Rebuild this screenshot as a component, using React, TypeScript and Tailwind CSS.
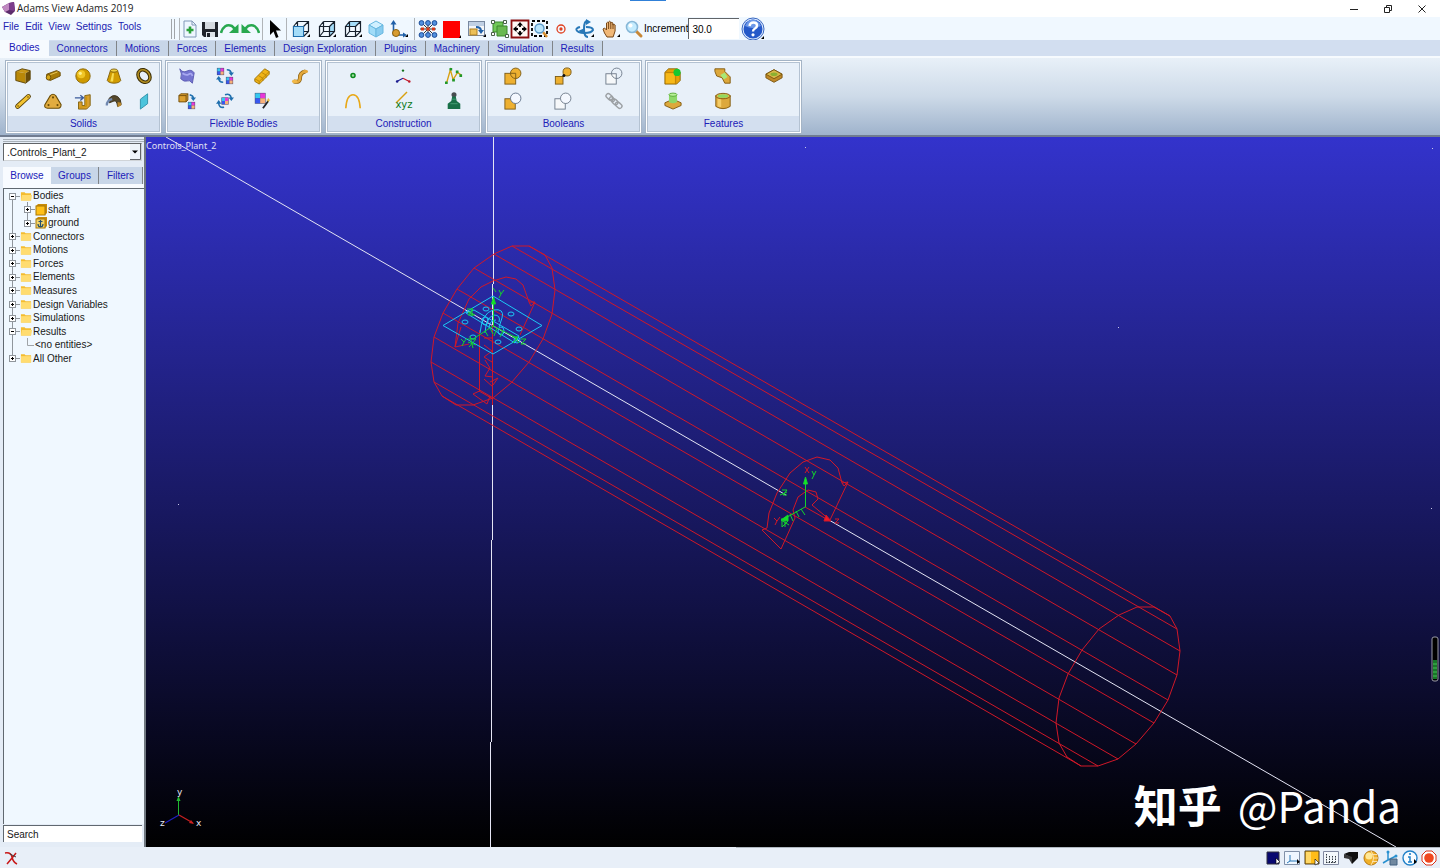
import { useState, type ReactNode } from 'react';

const gold = '#c99400';
const goldDark = '#6b4e08';
const blue = '#1f6fae';

const pixelGrid = (x: number, y: number, s: number) => (
  <g key={`${x}-${y}`}>
    <rect x={x} y={y} width={s} height={s} fill="#4a4a70" />
    <rect x={x + 0.5} y={y + 0.5} width={s / 2 - 0.5} height={s / 2 - 0.5} fill="#35c8f0" />
    <rect x={x + s / 2} y={y + 0.5} width={s / 2 - 0.5} height={s / 2 - 0.5} fill="#e838d8" />
    <rect x={x + 0.5} y={y + s / 2} width={s / 2 - 0.5} height={s / 2 - 0.5} fill="#3858f0" />
    <rect x={x + s / 2} y={y + s / 2} width={s / 2 - 0.5} height={s / 2 - 0.5} fill="#f8b078" />
  </g>
);

const cubeFrame = (
  <g fill="none" stroke="#16202c" strokeWidth="1.2">
    <path d="M2.5 7.5h10v10h-10zM6.5 2.5h11v10l-5 5M2.5 7.5l4-5M12.5 7.5l5-5M6.5 2.5v10h11M2.5 17.5l4-5" />
  </g>
);
const corner = <path d="M16 18h3v-3z" fill="#000" />;

const icons: Record<string, ReactNode> = {
  box: (
    <>
      <path d="M2 5l7-3 9 2-5 3z" fill="#c89818" />
      <path d="M2 5l11 2v11L2 15z" fill="#b88808" />
      <path d="M13 7l5-3v10l-5 4z" fill={goldDark} />
      <path d="M2 5l7-3 9 2v10l-5 4-11-3z" fill="none" stroke="#5c4408" />
    </>
  ),
  link: (
    <>
      <path d="M3 8l11-4 4 2v4L7 15l-4-2z" fill="#a87c08" stroke="#6b4e08" />
      <ellipse cx="5" cy="11.500" rx="2.500" ry="3" fill="#d8a818" stroke={goldDark} />
      <path d="M7 8.500l8-3" stroke="#f0d060" />
    </>
  ),
  sphere: (
    <>
      <circle cx="10" cy="10" r="8" fill="#cf9a00" stroke="#8a6808" />
      <circle cx="8" cy="8" r="4.500" fill="#f7d030" opacity=".8" />
      <circle cx="7" cy="7" r="1.800" fill="#fff08c" />
    </>
  ),
  frustum: (
    <>
      <path d="M6 4L2.500 15c2 4 13 4 15 0L14 4z" fill="#d29c00" stroke="#80600a" />
      <ellipse cx="10" cy="4" rx="4" ry="1.800" fill="#f0d040" stroke="#80600a" />
      <path d="M8 7l-2 9h3l1-9z" fill="#f8dc50" />
    </>
  ),
  torus: (
    <g transform="rotate(50 10 10)" fill="none">
      <ellipse cx="10" cy="10" rx="7.500" ry="6" stroke="#3c2e06" strokeWidth="4" />
      <ellipse cx="10" cy="10" rx="7.500" ry="6" stroke="#b08c20" strokeWidth="1.800" />
    </g>
  ),
  bar: (
    <>
      <path d="M4 16L16 5" stroke="#5c4408" strokeWidth="5.500" strokeLinecap="round" />
      <path d="M4 16L16 5" stroke="#f2c230" strokeWidth="3.500" strokeLinecap="round" />
      <path d="M4.500 15.500l.1-.1M15.500 5.500l.1-.1" stroke="#5c4408" strokeWidth="1.500" strokeLinecap="round" />
    </>
  ),
  plate: (
    <>
      <path d="M7 4q3-3 6 0l6 10q0 4-3 4H4q-4 0-3-4z" fill="#e2ac40" stroke="#6b4e08" strokeWidth="1.200" />
      <g fill="#6b4e08">
        <circle cx="10" cy="6" r="1.200" /><circle cx="5" cy="14.500" r="1.200" /><circle cx="15" cy="14.500" r="1.200" />
      </g>
    </>
  ),
  extrude: (
    <>
      <path d="M5 11h4v4h3V4l6-1v12l-4 4H5z" fill="#d8a030" stroke="#80600a" />
      <path d="M14 5v11l-8 1" fill="none" stroke={gold} />
      <path d="M1 6.500h9M7 3.500l3.500 3L7 9.500" fill="none" stroke="#3a5a9a" strokeWidth="1.500" />
    </>
  ),
  revolve: (
    <>
      <path d="M4 8Q8 2 14 5q4 3 4 9l-4 2q-1-7-4-6l-5 2z" fill="#55482c" stroke="#39301c" />
      <path d="M2 15q0-6 6-7" fill="none" stroke="#7088b0" strokeWidth="2.500" />
      <path d="M14 11l4 1v3l-4 2z" fill="#b8862c" />
    </>
  ),
  plane: <path d="M6 8l8-6v11l-8 6z" fill="#4cc4dc" stroke="#2c90a8" />,
  wave: (
    <>
      <path d="M2 2q3 5 8 2.500t8 2L16 18q-3-4-6-2.500T3 13q2-5-1-11z" fill="#7474d0" stroke="#5858b0" />
      <path d="M5 7q4 3 7 1t4 2" fill="none" stroke="#a8a8f0" strokeWidth="2" />
    </>
  ),
  swap: (
    <>
      {pixelGrid(1, 1, 8)}
      {pixelGrid(11, 11, 8)}
      <path d="M12 3q5 0 5 5M8 17q-5 0-5-5" fill="none" stroke={blue} strokeWidth="1.800" />
      <path d="M14 6h6l-3 4zM0 14h6l-3-4z" fill={blue} />
    </>
  ),
  brick: (
    <>
      <path d="M2 13L13 2l5 3v3L7 19l-5-3z" fill="#f0b418" stroke="#9a7008" />
      <path d="M2 13l5 3L18 5M7 16v3M6 9.500l5 3v3M9.500 6l5 3v3" fill="none" stroke="#b88408" />
    </>
  ),
  beam: (
    <>
      <path d="M3 16q7 2 7-4t6-7" fill="none" stroke="#8a6010" strokeWidth="4.500" />
      <path d="M3 16q7 2 7-4t6-7" fill="none" stroke="#e4a83c" strokeWidth="3" />
      <ellipse cx="4" cy="16" rx="3" ry="2" fill="#f0b848" /><ellipse cx="16" cy="5" rx="3" ry="2" fill="#e4a83c" />
    </>
  ),
  boxSwap: (
    <>
      <path d="M1 4l2-2h8v7l-2 2H1z" fill="#dca030" stroke="#704c08" /><path d="M1 4h8v7M9 4l2-2" fill="none" stroke="#704c08" />
      {pixelGrid(11, 11, 8)}
      <path d="M13 3q4 1 4 4" fill="none" stroke={blue} strokeWidth="1.800" /><path d="M14 6h6l-3 4z" fill={blue} />
    </>
  ),
  rotateGrid: (
    <>
      {pixelGrid(6, 6, 8)}
      <path d="M10 3q6-2 7 4M9 17q-6 1-6-5" fill="none" stroke={blue} strokeWidth="1.800" />
      <path d="M14 6h6l-3 4zM0 13l3-4 3 4z" fill={blue} />
    </>
  ),
  wand: (
    <>
      {pixelGrid(2, 1, 12)}
      <path d="M11 18l6-8" stroke="#222" strokeWidth="2" /><path d="M17 7v4M15 9h4" stroke="#e8b020" />
    </>
  ),
  point: <circle cx="10" cy="9.500" r="2" fill="#9fdc9f" stroke="#0a8a1c" strokeWidth="1.500" />,
  marker: (
    <>
      <path d="M10 12.500L3 16" stroke="#1c1c90" strokeWidth="1.200" /><path d="M10 12.500l7 3.500" stroke="#c01828" strokeWidth="1.200" />
      <circle cx="10" cy="4" r="1.300" fill="#107018" />
      <circle cx="3.500" cy="16" r="1.400" fill="#1c1c90" /><circle cx="17" cy="16" r="1.400" fill="#c01828" />
    </>
  ),
  polyline: (
    <>
      <path d="M2 17L6 3l3 11 5-8 4 3" fill="none" stroke="#d8a010" strokeWidth="1.500" />
      <g fill="#209828"><path d="M0 16h3v3H0zM5 1h3v3H5zM8 13h3v3H8zM12 4h3v3h-3zM16 8h3v3h-3z" /></g>
    </>
  ),
  arc: <path d="M2 18Q3 3 10 3t8 15" fill="none" stroke="#e8a818" strokeWidth="1.800" />,
  mass: (
    <>
      <circle cx="10" cy="3" r="2.800" fill="#484c50" /><path d="M8 5h4l1 5 4 3v6H3v-6l4-3z" fill="#187048" />
      <path d="M8 8h4M6 13h8" stroke="#48a078" />
    </>
  ),
  unite: (
    <><rect x="1" y="7" width="12" height="12" fill="#eeb030" stroke="#7a5a14" /><circle cx="13" cy="7" r="5.800" fill="#eeb030" stroke="#7a5a14" /><path d="M7 7h6v6" fill="none" stroke="#7a5a14" /></>
  ),
  merge: (
    <><rect x="1.500" y="10.500" width="8.500" height="8.500" fill="#eeb030" stroke="#7a5a14" /><circle cx="14.500" cy="5.500" r="4.500" fill="#eeb030" stroke="#7a5a14" /><circle cx="11" cy="9.500" r="1.700" fill="#111" /></>
  ),
  intersect: (
    <g fill="none" stroke="#6c7888"><rect x="1" y="7.500" width="11.500" height="11.500" fill="#f6f8fa" /><circle cx="13" cy="7" r="5.800" /></g>
  ),
  subtract: (
    <><rect x="1" y="7.500" width="11.500" height="11.500" fill="#eeb030" stroke="#7a5a14" /><circle cx="13" cy="7" r="5.800" fill="#f4f8ff" stroke="#607088" /></>
  ),
  split: (
    <g stroke="#6c7888"><rect x="1" y="7.500" width="11.500" height="11.500" fill="#f6f8fa" /><circle cx="13" cy="7" r="5.800" fill="#f4f8ff" /></g>
  ),
  chain: (
    <g fill="none" stroke="#9ca0a4" strokeWidth="1.600"><g transform="rotate(42 10 10)"><rect x="-1" y="7.500" width="8" height="5" rx="2.500" /><rect x="4" y="8" width="6" height="4" rx="2" /><rect x="8" y="7.500" width="7" height="5" rx="2.500" /><rect x="13" y="7.500" width="8" height="5" rx="2.500" /></g></g>
  ),
  fillet: (
    <>
      <path d="M1 6l4-4h10l3 4v9l-4 4H1z" fill="#e8a008" stroke="#8a6808" /><path d="M1 6h12v13" fill="none" stroke="#b88008" />
      <path d="M2 7h10v11H2z" fill="#f6b818" />
      <circle cx="14.500" cy="6" r="4" fill="#18c830" />
    </>
  ),
  chamfer: (
    <><path d="M1 2h11v3l6 6v7h-6l-3-6-6-2-2-5z" fill="#dda83c" stroke="#80580c" /><path d="M7 9l5-3 3 5-4 3z" fill="#a8e878" /></>
  ),
  hole: (
    <><path d="M1 8l9-5 9 5v4l-9 5-9-5z" fill="#c08828" stroke="#78540c" /><path d="M1 8l9-5 9 5-9 5z" fill="#d8b848" stroke="#78540c" /><ellipse cx="10" cy="8" rx="4" ry="2" fill="#8cb030" /></>
  ),
  boss: (
    <><path d="M1 12l9-4 9 4v3l-9 4-9-4z" fill="#dda83c" stroke="#80580c" /><path d="M5.500 3v8q4.500 3 9 0V3z" fill="#8cd868" /><ellipse cx="10" cy="3" rx="4.500" ry="1.800" fill="#b8f098" stroke="#58a838" /></>
  ),
  hollow: (
    <><path d="M2 4v12q8 5 16 0V4z" fill="#dda83c" stroke="#80580c" /><path d="M4 7v9l4 1V8z" fill="#f4cc68" /><ellipse cx="10" cy="4.500" rx="8" ry="3" fill="#e8b848" stroke="#80580c" /><ellipse cx="10" cy="4.500" rx="6" ry="2" fill="#90d860" /></>
  ),
  newDoc: (
    <>
      <path d="M4 2h8l4 4v12H4z" fill="#eef6ff" stroke="#8098b8" /><path d="M12 2v4h4" fill="none" stroke="#8098b8" />
      <path d="M10 7.500v7M6.500 11h7" stroke="#28a038" strokeWidth="2.600" />
    </>
  ),
  save: (
    <>
      <path d="M2 3h16v15H4l-2-2z" fill="#20242c" /><path d="M5 3h10v7H5z" fill="#d4dae0" /><path d="M6 13h9v5H6z" fill="#dfe4ea" /><path d="M7 14h3v4H7z" fill="#20242c" />
    </>
  ),
  redo: (
    <><path d="M1 14q3-10 11-7l4 4" fill="none" stroke="#28a850" strokeWidth="2.600" /><path d="M18.500 5v9H9z" fill="#28a850" /></>
  ),
  undo: (
    <><path d="M19 14Q16 4 8 7l-4 4" fill="none" stroke="#28a850" strokeWidth="2.600" /><path d="M1.500 5v9H11z" fill="#28a850" /></>
  ),
  cursor: <path d="M6 1v15l3.500-3.500L12 19l2.500-1L12 11.500h5z" fill="#000" />,
  cubeFront: <>{cubeFrame}<path d="M2.500 7.500h10v10h-10z" fill="#a4dcf8" stroke="#1f6fae" />{corner}</>,
  cubeSide: <><path d="M12.500 7.500l5-5v10l-5 5z" fill="#a4dcf8" />{cubeFrame}{corner}</>,
  cubeTop: <><path d="M2.500 7.500l4-5h11l-5 5z" fill="#a4dcf8" />{cubeFrame}{corner}</>,
  cubeIso: (
    <g stroke="#68b8e0"><path d="M3 6l7-4 7 4-7 4z" fill="#d0f0ff" /><path d="M3 6l7 4v8l-7-4z" fill="#a0dcf8" /><path d="M17 6l-7 4v8l7-4z" fill="#88ccf0" /></g>
  ),
  axes: (
    <><path d="M4.500 3v13H16" fill="none" stroke="#2060a8" strokeWidth="1.600" /><path d="M1.500 5.500l3-4.500 3 4.500zM14 13.500l4 2.500-4 2.500z" fill="#2060a8" /><circle cx="7" cy="14" r="3.500" fill="#d89c30" stroke="#8a6010" />{corner}</>
  ),
  nodes: (
    <>
      <path d="M4 4l12 12M16 4L4 16M10 3v14M2 10h16" stroke="#333" />
      {[3.5, 10, 16.5].map((x) => <g key={x} fill="#5090e0" stroke="#1c4c98"><circle cx={x} cy="4" r="2.400" /><circle cx={x} cy="16" r="2.400" /></g>)}
      <path d="M3 10h3M8.500 10h3M14 10h3" stroke="#d83818" strokeWidth="3" />
    </>
  ),
  red: <><path d="M1 2h17v17H1z" fill="#ff0000" /><path d="M17 19h2v-3z" fill="#000" /></>,
  windows: (
    <><rect x="1.500" y="2.500" width="16" height="14" fill="#f4f6f8" stroke="#7888a0" /><path d="M2 3h15v4H2z" fill="#c0d0e4" /><rect x="3" y="10" width="7" height="6" fill="#ecc058" stroke="#b08020" /><path d="M9 8q5 0 5 4" fill="none" stroke="#2060a8" strokeWidth="2" /><path d="M11 11h6l-3 4z" fill="#2060a8" />{corner}</>
  ),
  group: (
    <><path d="M3 3h10v10H3z" fill="#70c858" stroke="#388828" /><path d="M7 7h10v10H7z" fill="#68b850" stroke="#388828" /><g fill="#fff" stroke="#486048"><path d="M1.500 1.500h3v3h-3zM13.500 1.500h3v3h-3zM1.500 13.500h3v3h-3zM15.500 15.500h3v3h-3z" /></g></>
  ),
  pan: (
    <><path d="M1.500 1.500h17v17h-17z" fill="#fff8f4" stroke="#8c1010" strokeWidth="1.800" /><path d="M10 3l3 3.500H7zM10 17l3-3.500H7zM3 10l3.500-3v6zM17 10l-3.500-3v6z" fill="#000" /><path d="M10 6v2M10 12v2M6 10h2M12 10h2" stroke="#000" strokeWidth="1.800" /></>
  ),
  zoomBox: (
    <><path d="M2 2h15v15H2z" fill="none" stroke="#000" strokeWidth="1.800" strokeDasharray="3 2" /><path d="M13 13l4 5" stroke="#d89030" strokeWidth="2.500" /><circle cx="9.500" cy="9.500" r="4.500" fill="#b8e4fc" stroke="#5898c8" strokeWidth="1.400" /></>
  ),
  target: <g fill="none" stroke="#e04020" strokeWidth="1.300"><circle cx="10" cy="10" r="4" /><circle cx="10" cy="10" r="1" fill="#e04020" /></g>,
  rotate: (
    <><g fill="none" stroke="#2878b8" strokeWidth="2"><path d="M5 8q-4 1-3.500 3 1 3 8 3t8.500-3q0-3-7-3" /><path d="M13 2Q9 1 9 10q0 8 4 8" /></g><path d="M11 0l5 3-5 3zM3 12l7-3v6z" fill="#2878b8" />{corner}</>
  ),
  hand: (
    <><path d="M6 18q-3-4-4-8l1.500-1L5.500 11V4q1-1.500 2 0V3q1-1.500 2.200 0v1q1-1.300 2.200 0v2q1.500-1.200 2.200 0v6l-2 6z" fill="#f0b878" stroke="#784818" /><path d="M7.600 4v6M9.800 4v6M12 5v5" stroke="#784818" />{corner}</>
  ),
  zoom: (
    <><path d="M12 12l5 5" stroke="#c88838" strokeWidth="3" strokeLinecap="round" /><circle cx="8" cy="8" r="5.500" fill="#c4ecff" stroke="#88b8d8" strokeWidth="1.600" /><circle cx="6.500" cy="6.500" r="2" fill="#fff" /></>
  ),
};

function Icon({ name, className = 'size-5' }: { name: string; className?: string }) {
  return (
    <svg viewBox="0 0 20 20" className={`${className} shrink-0`} aria-hidden="true">
      {icons[name]}
    </svg>
  );
}

function XyzIcon() {
  return (
    <svg viewBox="0 0 20 20" className="size-5 shrink-0 overflow-visible" aria-hidden="true">
      <path d="M3 12L14 1" stroke="#d8a010" strokeWidth="1.500" />
      <text x="11" y="17" textAnchor="middle" className="font-['DejaVu_Sans'] text-[10px]" fill="#0e7a20">xyz</text>
    </svg>
  );
}

type Tool = { name: string; label: string; width: string; divider?: boolean };
const tools: Tool[] = [
  { name: 'newDoc', label: 'New', width: 'w-5' },
  { name: 'save', label: 'Save', width: 'w-5' },
  { name: 'redo', label: 'Redo', width: 'w-5' },
  { name: 'undo', label: 'Undo', width: 'w-5', divider: true },
  { name: 'cursor', label: 'Select', width: 'w-5', divider: true },
  { name: 'cubeFront', label: 'Front view', width: 'w-[26px]' },
  { name: 'cubeSide', label: 'Right view', width: 'w-[26px]' },
  { name: 'cubeTop', label: 'Top view', width: 'w-[26px]' },
  { name: 'cubeIso', label: 'Isometric view', width: 'w-5' },
  { name: 'axes', label: 'Orient', width: 'w-[26px]', divider: true },
  { name: 'nodes', label: 'Modeling', width: 'w-6' },
  { name: 'red', label: 'Color', width: 'w-6' },
  { name: 'windows', label: 'Window layout', width: 'w-[26px]' },
  { name: 'group', label: 'Grid', width: 'w-5' },
  { name: 'pan', label: 'Fit', width: 'w-5' },
  { name: 'zoomBox', label: 'Zoom box', width: 'w-5' },
  { name: 'target', label: 'Center', width: 'w-[22px]' },
  { name: 'rotate', label: 'Rotate', width: 'w-[26px]' },
  { name: 'hand', label: 'Translate', width: 'w-[26px]' },
  { name: 'zoom', label: 'Zoom', width: 'w-5' },
];

const ribbonTabs = ['Bodies', 'Connectors', 'Motions', 'Forces', 'Elements', 'Design Exploration', 'Plugins', 'Machinery', 'Simulation', 'Results'];

const ribbonGroups = [
  { title: 'Solids', cols: 'grid-cols-5', items: ['box', 'link', 'sphere', 'frustum', 'torus', 'bar', 'plate', 'extrude', 'revolve', 'plane'] },
  { title: 'Flexible Bodies', cols: 'grid-cols-4', items: ['wave', 'swap', 'brick', 'beam', 'boxSwap', 'rotateGrid', 'wand'] },
  { title: 'Construction', cols: 'grid-cols-3', items: ['point', 'marker', 'polyline', 'arc', 'xyz', 'mass'] },
  { title: 'Booleans', cols: 'grid-cols-3', items: ['unite', 'merge', 'intersect', 'subtract', 'split', 'chain'] },
  { title: 'Features', cols: 'grid-cols-3', items: ['fillet', 'chamfer', 'hole', 'boss', 'hollow'] },
];

type Node = { label: string; kind: 'folder' | 'part' | 'ground' | 'none'; open?: boolean };
const tree: Node[] = [
  { label: 'Bodies', kind: 'folder', open: true },
  { label: 'shaft', kind: 'part' },
  { label: 'ground', kind: 'ground' },
  { label: 'Connectors', kind: 'folder' },
  { label: 'Motions', kind: 'folder' },
  { label: 'Forces', kind: 'folder' },
  { label: 'Elements', kind: 'folder' },
  { label: 'Measures', kind: 'folder' },
  { label: 'Design Variables', kind: 'folder' },
  { label: 'Simulations', kind: 'folder' },
  { label: 'Results', kind: 'folder', open: true },
  { label: '<no entities>', kind: 'none' },
  { label: 'All Other', kind: 'folder' },
];

function TitleBar() {
  return (
    <header className="flex h-[17px] shrink-0 items-center bg-white pl-0.5 font-['Open_Sans',sans-serif] text-[10px] text-[#222]">
      <svg viewBox="0 0 13 13" className="size-[13px]" aria-hidden="true">
        <path d="M0 5l7-4 5-1 1 9-4 4-6-3z" fill="#5c2c6c" />
        <path d="M0 5l7-4v7l-4 2z" fill="#c088c0" />
        <path d="M7 1l5-1 1 9-6-1z" fill="#7c3c8c" />
      </svg>
      <h1 className="ml-0.5 grow">Adams View Adams 2019</h1>
      <div className="flex items-center gap-[22px] pr-3">
        <button aria-label="Minimize"><svg viewBox="0 0 12 12" className="size-3"><path d="M2 6.500h8" stroke="#222" /></svg></button>
        <button aria-label="Restore"><svg viewBox="0 0 12 12" className="size-3" fill="none" stroke="#222"><path d="M2.500 4.500h5v5h-5zM4.500 4V2.500h5v5H8" /></svg></button>
        <button aria-label="Close"><svg viewBox="0 0 12 12" className="size-3" stroke="#222"><path d="M2.500 2.500l7 7M9.500 2.500l-7 7" /></svg></button>
      </div>
      <div className="absolute top-0 left-[630px] h-px w-9 bg-[#3080d8]" />
    </header>
  );
}

function Toolbar() {
  return (
    <div className="flex h-[23px] shrink-0 items-center bg-[#f0f8ff]">
      <nav className="flex w-[171px] shrink-0 items-center gap-1.5 self-start pt-0.5 pl-[3px] leading-4 text-[#2020b0]">
        {['File', 'Edit', 'View', 'Settings', 'Tools'].map((m) => (
          <button key={m}>{m}</button>
        ))}
      </nav>
      <div className="mr-1 h-5 w-1 border-x border-[#a0a4a8]" />
      <div className="h-[22px] w-px bg-[#b0b4b8]" />
      {tools.map((t) => (
        <div key={t.name} className="flex items-center">
          <button aria-label={t.label} className={`${t.width} flex justify-center`}>
            <Icon name={t.name} />
          </button>
          {t.divider && <div className="mr-px ml-0.5 h-[22px] w-px bg-[#b0b4b8]" />}
        </div>
      ))}
      <label htmlFor="increment" className="text-black">Increment</label>
      <input id="increment" defaultValue="30.0" className="h-[21px] w-[51px] border-t border-l border-[#606468] bg-white px-[3px] text-black outline-none" />
      <button aria-label="Help" className="ml-0.5">
        <svg viewBox="0 0 24 24" className="size-6">
          <circle cx="12" cy="12" r="11" fill="#e0ecff" stroke="#3a68c0" />
          <circle cx="12" cy="12" r="9.500" fill="#2458c8" />
          <path d="M4 9q3-7 8-6.500T20 9q-8 4-16 0z" fill="#6c98e8" />
          <path d="M8.500 9q.5-3.500 4-3.500t3.500 3q0 2-2 3t-2 3" fill="none" stroke="#fff" strokeWidth="2.400" />
          <circle cx="12" cy="17.800" r="1.600" fill="#fff" /><path d="M20 22h3v-3z" fill="#000" />
        </svg>
      </button>
    </div>
  );
}

function Ribbon() {
  const [active, setActive] = useState('Bodies');
  return (
    <>
      <div role="tablist" className="flex h-4 shrink-0 bg-[#d2def0]">
        {ribbonTabs.map((t) => (
          <button
            key={t}
            role="tab"
            aria-selected={t === active}
            onClick={() => setActive(t)}
            className={`leading-4 text-[#2020b8] ${t === active ? 'bg-[#f6fafe] px-[9px]' : 'mt-px border-r border-[#808488] bg-[#c8d6e8] px-2'}`}
          >
            {t}
          </button>
        ))}
      </div>
      <div className="flex h-[81px] shrink-0 gap-[3px] border-t-2 border-b-2 border-t-[#f6fafe] border-b-[#707c90] bg-linear-to-b/srgb from-[#e8f0f8] via-[#cddae8] to-[#9fb3cc] px-[5px] pt-0.5">
        {ribbonGroups.map((g) => (
          <section key={g.title} className="flex h-[74px] w-[157px] flex-col border border-[#a4b4c6] bg-white p-px">
            <div className="flex grow flex-col border border-[#b4c2d2] bg-[#e8f0f9]">
              <div className={`grid grow content-start items-center justify-items-center ${g.cols}`}>
                {g.items.map((n) => (
                  <button key={n} aria-label={n} className="flex h-[25px] items-center">
                    {n === 'xyz' ? <XyzIcon /> : <Icon name={n} className={n === 'point' ? 'size-5' : 'size-[18px]'} />}
                  </button>
                ))}
              </div>
              <h2 className="bg-[#d3dfef] text-center leading-[15px] text-[#2020b8]">{g.title}</h2>
            </div>
          </section>
        ))}
      </div>
    </>
  );
}

function TreeRow({ node, first, last }: { node: Node; first: boolean; last: boolean }) {
  const folder = node.kind === 'folder';
  return (
    <li className="flex min-h-0 flex-1 items-center whitespace-nowrap">
      <svg viewBox="0 0 16 14" className="h-3.5 w-4 shrink-0" aria-hidden="true">
        {!last && <path d={first ? 'M8.500 6v8' : 'M8.500 0v14'} stroke="#90969c" />}
        {last && <path d="M8.500 0v7" stroke="#90969c" />}
        {folder && (
          <>
            <path d="M8 7.500h8" stroke="#90969c" />
            <rect x="5.500" y="4.500" width="6" height="6" fill="#fff" stroke="#90969c" />
            <path d={node.open ? 'M7 7.500h3' : 'M7 7.500h3M8.500 6v3'} stroke="#000" />
          </>
        )}
      </svg>
      {folder && (
        <svg viewBox="0 0 13 12" className="mr-px h-3 w-3 shrink-0" aria-hidden="true">
          <path d="M1 2h4l1 1h6v8H1z" fill="#f4bc30" />
          <path d={node.open ? 'M2 5h11l-1 6H1z' : 'M1 4h11v7H1z'} fill="#ffdc70" />
        </svg>
      )}
      {!folder && (
        <svg viewBox="0 0 15 14" className="h-3.5 w-[15px] shrink-0" aria-hidden="true">
          {node.kind === 'none' ? (
            <path d="M7.500 0v7.500H14" fill="none" stroke="#a0a4a8" />
          ) : (
            <>
              <path d={node.kind === 'part' ? 'M7.500 0v14M7 7.500h8' : 'M7.500 0v7M7 7.500h8'} fill="none" stroke="#90969c" />
              <rect x="4.500" y="4.500" width="6" height="6" fill="#fff" stroke="#90969c" />
              <path d="M6 7.500h3M7.500 6v3" stroke="#000" />
            </>
          )}
        </svg>
      )}
      {(node.kind === 'part' || node.kind === 'ground') && (
        <svg viewBox="0 0 13 13" className="size-[13px] shrink-0" aria-hidden="true">
          <path d="M1 3l2-2h9v9l-2 2H1z" fill="#c88c08" />
          <rect x="1" y="3" width="9" height="9" fill={node.kind === 'ground' ? '#f4d468' : '#ffc018'} stroke="#a87808" />
          {node.kind === 'ground' && <path d="M5.500 4v7M3.500 5.500h4M3 8q0 3 2.500 3T8 8" fill="none" stroke="#28506c" strokeWidth="1.200" />}
        </svg>
      )}
      <span>{node.label}</span>
    </li>
  );
}

function Sidebar() {
  const [tab, setTab] = useState('Browse');
  return (
    <aside className="flex w-[146px] shrink-0 flex-col border-r-2 border-[#707880] bg-[#e4ecf6] pl-[3px] text-[#181818]">
      <div className="mt-0.5 h-[3px] border-y border-[#a8b0b8]" />
      <div className="relative mt-px mr-0.5">
        <select aria-label="Model" className="h-[18px] w-full appearance-none border border-t-[#606468] border-r-[#d0d4d8] border-b-[#d0d4d8] border-l-[#606468] bg-white pl-[3px]">
          <option>.Controls_Plant_2</option>
        </select>
        <svg viewBox="0 0 11 16" className="pointer-events-none absolute top-px right-px h-4 w-[11px]" aria-hidden="true">
          <path d="M0 0h11v16H0z" fill="#eef4fa" /><path d="M0 15.500h10.500V0" fill="none" stroke="#606468" />
          <path d="M2 6.500h6L5 9.500z" fill="#000" />
        </svg>
      </div>
      <div role="tablist" className="mt-1.5 flex h-[17px]">
        {[['Browse', 'w-12'], ['Groups', 'w-12'], ['Filters', 'w-11']].map(([t, w]) => (
          <button
            key={t}
            role="tab"
            aria-selected={t === tab}
            onClick={() => setTab(t)}
            className={`${w} leading-4 text-[#2020b8] ${t === tab ? 'bg-[#f8fbff]' : 'border-r border-[#808488] bg-[#c8d6e8]'}`}
          >
            {t}
          </button>
        ))}
      </div>
      <div className="h-1 shrink-0 bg-[#f8fbff]" />
      <div className="grow border-t border-l border-[#606870] bg-[#f0f8ff]">
        <ul aria-label="Model tree" className="flex h-[176px] flex-col">
          {tree.map((n, i) => (
            <TreeRow key={n.label} node={n} first={i === 0} last={i === tree.length - 1} />
          ))}
        </ul>
      </div>
      <input aria-label="Search" defaultValue="Search" className="mt-px mr-0.5 mb-[5px] h-[17px] border-t border-l border-[#606870] bg-white px-[3px] outline-none" />
    </aside>
  );
}

const shaft = { dx: 625, dy: 361 };
const rim: [number, number][] = [
  [1137, 607], [1154, 607], [1170, 616], [1177, 629], [1180, 651], [1177, 675], [1168, 700], [1154, 723], [1136, 744], [1118, 759],
  [1098, 766], [1081, 766], [1067, 757], [1059, 743], [1056, 723], [1059, 698], [1068, 674], [1082, 650], [1099, 629], [1119, 615],
];
const rimPath = `M${rim.map((p) => p.join(' ')).join('L')}Z`;
const generators = rim.slice(2, 12).map(([x, y], i) => {
  const [nx, ny] = rim[(21 - i) % 20];
  return `M${x} ${y}L${nx - shaft.dx} ${ny - shaft.dy}`;
});

function Scene() {
  return (
    <svg viewBox="146 137 1294 710" preserveAspectRatio="xMidYMid slice" className="absolute inset-0 size-full" role="img" aria-label="Shaft model">
      <g fill="none" stroke="#e4e4f4">
        <path d="M166 137L786 495M829 520L1396 847" />
        <path d="M493.500 137L492.500 443L490.500 847" shapeRendering="crispEdges" />
      </g>
      <g fill="none" stroke="#d01828">
        <path d={rimPath} />
        <path d={rimPath} transform={`translate(${-shaft.dx} ${-shaft.dy})`} />
        {generators.map((d) => <path key={d} d={d} />)}
      </g>
      <g fill="none" stroke="#d01828">
        <path d="M762 530L767 528L769 513L777 493L790 473L803 462L817 457L830 460L838 468L842 483L848 482L830 520L812 505L818 499L816 492L808 490L798 497L793 510L795 518L781 549ZM842 483l2 3 4-4" />
        <path d="M805 507L830 521" />
        <path d="M826 515l5 6h-7z" fill="#f01828" />
        <path d="M455 347L458 323L469 299L481 287L493 281L506 277L516 279L523 285L529 302L535 302L520 335M529 302l2 4 4-4M455 347l6-20M455 347l14-3" />
        <path d="M479.500 330V391L473 394L487 404L490 396M492.500 325v80M479 391l14 8M484 338h9M484 345l8 6-8 6 8 5M485 360l5 8-5 8 8 1M484 379l9 8M490 382l8-4-5 7" />
        <path d="M805 467l4 6M809 467l-4 6M774 518l3 3 3-4M777 521l-2 4M835 519h4l-4 4h4" />
      </g>
      <g fill="none" stroke="#1cc8f4">
        <path d="M443 325.500L493 296L542 325.500L493 354Z" />
        <path d="M466 313l8-3 45 26-4 7zM480 333q2-20 13-23 12-2 9 8l-3 9M485 333q1-16 9-18 7 0 5 7M489 329q0-9 7-9" />
        <ellipse cx="486" cy="309" rx="3" ry="2" /><ellipse cx="511" cy="314" rx="3" ry="2" />
        <ellipse cx="519" cy="329" rx="3" ry="2" /><ellipse cx="498" cy="342" rx="3" ry="2" />
        <ellipse cx="465" cy="322" rx="3" ry="2" /><ellipse cx="473" cy="337" rx="3" ry="2" />
        <ellipse cx="485" cy="321" rx="3" ry="4" /><ellipse cx="501" cy="331" rx="3" ry="4" />
        <ellipse cx="517" cy="340" rx="3" ry="3" />
      </g>
      <g fill="none" stroke="#14d42c">
        <path d="M805.500 507V480M805 507l-23 13M801 509l4 6M796 511l3 6M790 514l3 7" />
        <path d="M805.500 477l2 7h-4zM781 520l7-5v6z" fill="#14e428" />
        <path d="M812 471l2 4 2-4M814 475l-2 4M782 490h5l-4 5h4M780 495l7-3M782 518v9l6-6M781 520l8 5M785 518v9" />
        <path d="M493.500 327v-25M493 326l-20 13M493 326l24 12M485 331l3 5M490 328l3 6M497 328l-3 8M503 331l-3 6" />
        <path d="M493.500 297l2 7h-4z" fill="#14e428" />
        <path d="M493 288l3 4M499 290l2 4 3-4M501 294l-2 4M467 309h6l-5 6h6M468 312l7 3M472 308v8M461 339l3 3 3-4M464 342l-2 4M468 339h8l-7 8M470 336l3 12M468 342l8 3M512 337h6l-5 6M514 336l5 7M521 339h5l-5 5h5" />
      </g>
      <g fill="none">
        <path d="M178.500 815V799" stroke="#20b830" /><path d="M178.500 796l2 5h-4z" fill="#20b830" />
        <path d="M179 815l-14 8" stroke="#2020c0" strokeWidth="1.300" /><path d="M179 815l14 8" stroke="#c82020" strokeWidth="1.300" /><path d="M194 824l-5-1 2-3z" fill="#c82020" />
      </g>
      <g fill="#e8e8f4" className="font-['DejaVu_Sans',sans-serif] text-[9px]">
        <text x="177" y="795">y</text><text x="160" y="826">z</text><text x="196" y="826">x</text>
      </g>
      <path d="M805 147.500h1M1118 327.500h1M178 504.500h1M1431 508.500h1M1432 148.500h1" stroke="#c8c8e8" />
    </svg>
  );
}

function Viewport() {
  return (
    <main className="relative min-w-0 grow overflow-hidden bg-linear-to-b/srgb from-[#3333cc] to-black">
      <Scene />
      <p className="relative pt-[3px] font-['Noto_Sans',sans-serif] text-[9px] leading-3 text-[#e0e0f4]">Controls_Plant_2</p>
      <p className="absolute right-[39px] bottom-2.5 flex items-baseline gap-4 font-['Noto_Sans_CJK_SC',sans-serif] leading-[64px] text-white">
        <span className="text-[44px] font-bold">知乎</span>
        <span className="text-[42px]">@Panda</span>
      </p>
      <svg viewBox="0 0 8 46" className="absolute right-px bottom-[165px] h-[46px] w-2" aria-hidden="true">
        <rect x="1" y="1" width="6" height="44" rx="2" fill="#000" stroke="#9a9aa8" />
        <path d="M2 24h4v19H2z" fill="#187828" /><path d="M2 28h4M2 32h4M2 36h4M2 40h4" stroke="#48c058" />
      </svg>
    </main>
  );
}

const statusIcons: [string, ReactNode][] = [
  ['Background', <><path d="M2 2h12v12H2z" fill="#080870" stroke="#303040" /><path d="M11 8v6l4-2z" fill="#fff" stroke="#000" strokeWidth=".6" /></>],
  ['Triad', <><path d="M.5 1.500h15v13H.5z" fill="#eef6ff" stroke="#8090a8" /><path d="M6 5v6l-3 2M6 11h7" fill="none" stroke="#2878b8" /><path d="M13 9v5l3-2z" fill="#000" /></>],
  ['Render', <><path d="M1 1h14v13H1z" fill="#ffbc18" stroke="#504020" /><path d="M2 2h5v11H2z" fill="#ffd868" /><path d="M11 9v6l4-2z" fill="#fff" stroke="#000" strokeWidth=".6" /></>],
  ['Working grid', <><path d="M.5 1.500h15v13H.5z" fill="#f4f8fc" stroke="#8088a0" /><path d="M3.500 4v9M6.500 6v7M9.500 6v7M12.500 6v7M3 12.500h10" stroke="#303840" strokeDasharray="1.500 1" /></>],
  ['Perspective', <><path d="M1 4l5-2h9v6l-6 6V8z" fill="#101010" /><path d="M1 4l8 3v7L6 9 1 8z" fill="#383838" /></>],
  ['Globe', <><circle cx="8" cy="8" r="7" fill="#f0b028" stroke="#b87810" /><circle cx="6" cy="6" r="3.500" fill="#ffe898" /><path d="M8 1q5 7 0 14M10 8h5M9 4.500h5M9 11.500h5" fill="none" stroke="#f8e0b0" /></>],
  ['Coordinate', <><path d="M6 2v8l-5 3M6 10l8-4" fill="none" stroke="#2890d0" strokeWidth="1.500" /><circle cx="6" cy="2" r="1.500" fill="#2890d0" /><circle cx="14" cy="6" r="1.500" fill="#2890d0" /><path d="M8 9h7v6H8z" fill="#7088a0" stroke="#406080" /></>],
  ['Information', <><circle cx="8" cy="8" r="7" fill="#f8fcff" stroke="#2080c8" strokeWidth="1.400" /><path d="M6 7h2v5M6 12h4" fill="none" stroke="#2080c8" strokeWidth="1.500" /><circle cx="8" cy="4" r="1.100" fill="#2080c8" /><path d="M12 9v5l3-2z" fill="#000" /></>],
  ['Stop', <><path d="M5 1h6l4 4v6l-4 4H5l-4-4V5z" fill="#fff" stroke="#d83018" /><circle cx="8" cy="8" r="4.800" fill="#f04820" /></>],
];

function StatusBar() {
  return (
    <footer className="flex h-[21px] shrink-0 items-center bg-[#e8eff8] pl-1">
      <svg viewBox="0 0 14 14" className="size-3.5" fill="none" stroke="#c81818" strokeWidth="1.500" aria-hidden="true">
        <path d="M1 2q6-1 7 4t5 7M12 2Q9 6 3 13" /><path d="M6 3l6 3" stroke="#404040" strokeWidth="1" />
      </svg>
      <div className="ml-auto h-full w-[49%] border-t border-[#b0b8c0]">
        <div className="mr-px ml-auto grid h-full w-[176px] grid-cols-9 items-center justify-items-center">
          {statusIcons.map(([label, art]) => (
            <button key={label} aria-label={label}>
              <svg viewBox="0 0 16 16" className="size-4">{art}</svg>
            </button>
          ))}
        </div>
      </div>
    </footer>
  );
}

export default function App() {
  return (
    <div className="relative flex h-screen flex-col overflow-hidden bg-white font-['Liberation_Sans',Arial,sans-serif] text-[10px]">
      <TitleBar />
      <Toolbar />
      <Ribbon />
      <div className="flex min-h-0 grow">
        <Sidebar />
        <Viewport />
      </div>
      <StatusBar />
    </div>
  );
}
